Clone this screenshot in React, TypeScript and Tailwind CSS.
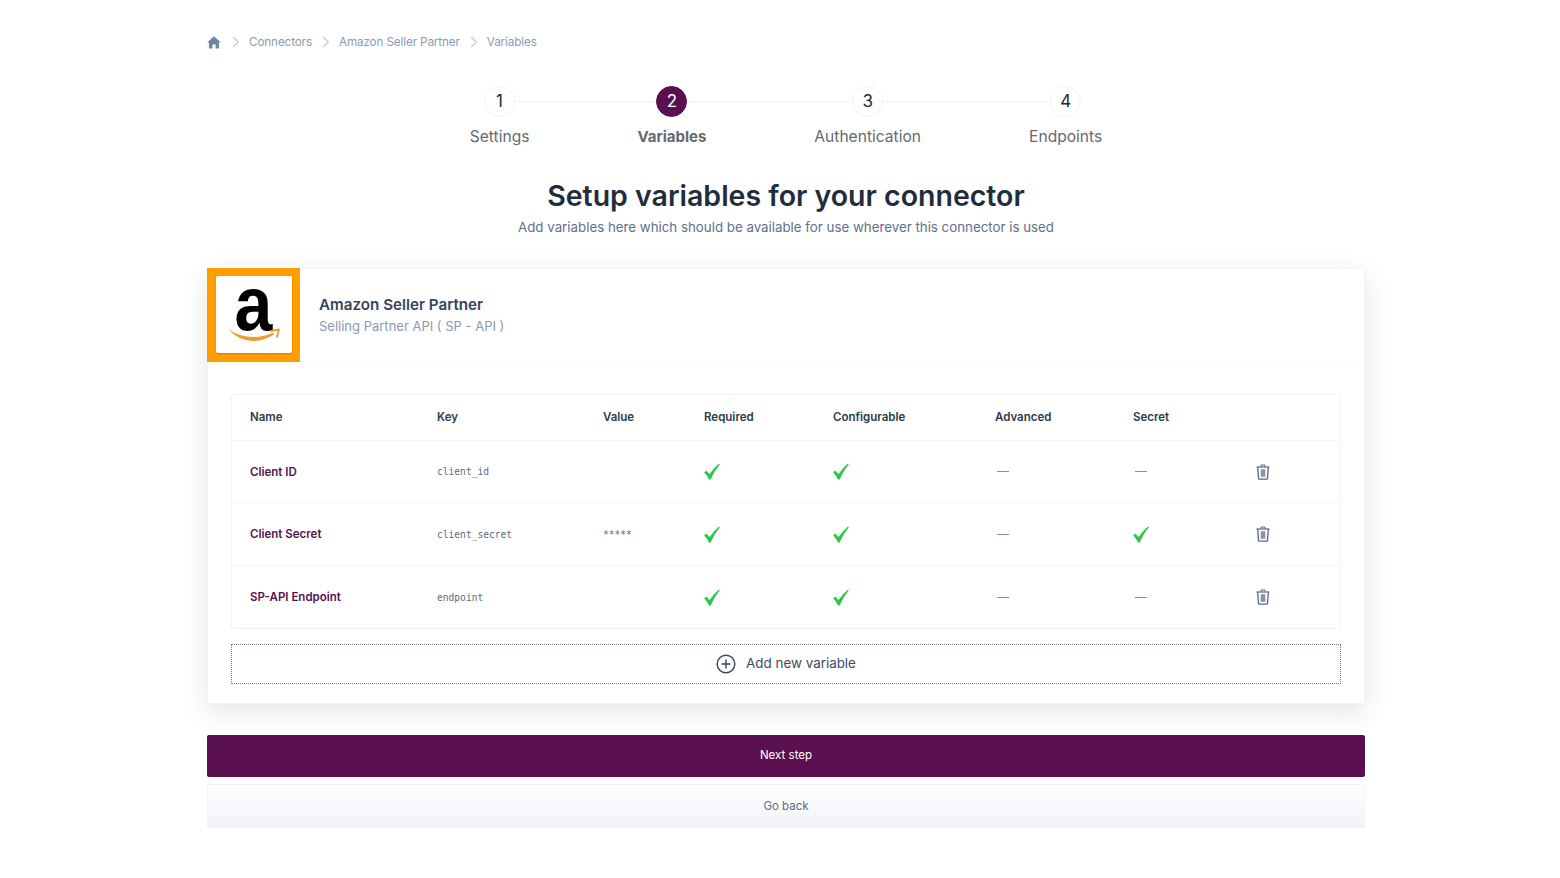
const FONT = "font-['Inter','Liberation_Sans',sans-serif]";

const steps = [
  { n: "1", label: "Settings" },
  { n: "2", label: "Variables", active: true },
  { n: "3", label: "Authentication" },
  { n: "4", label: "Endpoints" },
];

const rows = [
  { name: "Client ID", key: "client_id", value: "", secret: false, h: "h-[62px]" },
  { name: "Client Secret", key: "client_secret", value: "*****", secret: true, h: "h-[63px]" },
  { name: "SP-API Endpoint", key: "endpoint", value: "", secret: false, h: "h-[62px]" },
];

const gridCols = "grid grid-cols-[187px_166px_101px_129px_162px_138px_123px_1fr] pl-[18px] items-center";

const Check = () => (
  <svg width="16" height="17" viewBox="0 0 16 17" fill="#2ac845">
    <path d="M0.2 9.6 L2.2 7.6 L5.6 11 Q9.4 5 15 0.4 L15.8 1.2 Q10.4 7.6 6.6 16.4 L5 16.4 Q3.2 12.6 0.2 9.6 Z" />
  </svg>
);

const Dash = () => <div className="ml-[2px] h-px w-[12px] bg-[#8792a8]" />;

const Trash = () => (
  <svg width="14" height="16" viewBox="0 0 14 16" fill="none" stroke="#5a6679">
    <path d="M0.5 3h13" strokeWidth="1.2" />
    <path d="M5 2.6V1h4v1.6" strokeWidth="1" />
    <path d="M1.7 3.2l.8 11.3a.8.8 0 0 0 .8.7h7.4a.8.8 0 0 0 .8-.7l.8-11.3" strokeWidth="1.3" />
    <rect x="4.7" y="5.2" width="4.6" height="7.6" fill="#8a94a6" stroke="none" />
  </svg>
);

const Chevron = () => (
  <svg width="8" height="12" viewBox="0 0 8 12" fill="none" stroke="#c3cbd8" strokeWidth="1.2">
    <path d="M1.2 1l5.2 5-5.2 5" />
  </svg>
);

export default function App() {
  return (
    <div className={`${FONT} min-h-[878px] bg-white pl-[207px] pr-[195px] pt-[35px] antialiased`}>
      <nav className="flex h-[14px] items-center text-[11.7px] tracking-[-0.12px] text-[#8c9ab3]">
        <svg width="14" height="13" viewBox="0 0 14 13" fill="#6f83a3" className="mr-[11px]">
          <path d="M7 0.3 L13.8 6.6 L12 6.6 L12 12.6 L8.6 12.6 L8.6 8.4 L5.4 8.4 L5.4 12.6 L2 12.6 L2 6.6 L0.2 6.6 Z" />
        </svg>
        <Chevron />
        <span className="ml-[9px] pt-[2px]">Connectors</span>
        <span className="ml-[10px]"><Chevron /></span>
        <span className="ml-[9px] pt-[2px]">Amazon Seller Partner</span>
        <span className="ml-[10px]"><Chevron /></span>
        <span className="ml-[9px] pt-[2px]">Variables</span>
      </nav>

      <div className="relative mt-[37px] flex justify-center gap-[108px]">
        <div className="absolute left-[292px] top-[15px] h-px w-[567px] bg-[#f1f3f5]" />
        {steps.map((s) => (
          <div key={s.n} className="relative flex flex-col items-center">
            <div
              className={`flex h-[31px] w-[31px] items-center justify-center rounded-full border text-[17px] ${
                s.active
                  ? "border-[#5a1050] bg-[#5a1050] text-white"
                  : "border-[#f1f3f5] bg-white text-[#1d2733]"
              }`}
            >
              {s.n}
            </div>
            <div
              className={`mt-[10px] leading-[20px] text-[#666a70] ${
                s.active ? "text-[15px] font-bold" : "text-[15.6px]"
              }`}
            >
              {s.label}
            </div>
          </div>
        ))}
      </div>

      <h1 className="mt-[30px] text-center text-[28.5px] leading-[38px] font-semibold text-[#1f2d3d]">
        Setup variables for your connector
      </h1>
      <p className="mt-[2px] text-center text-[13.3px] leading-[20px] text-[#5f6f8c]">
        Add variables here which should be available for use wherever this connector is used
      </p>

      <section className="mt-[31px] h-[436px] border border-[#f1f3f7] bg-white shadow-[0_8px_24px_rgba(30,45,70,0.12)]">
        <header className="-ml-px -mt-px flex h-[94px] items-center border-b border-[#f4f6f9]">
          <div className="flex h-[94px] w-[93px] shrink-0 items-center justify-center bg-[#ff9e00]">
            <div className="relative flex h-[77px] w-[76px] flex-col items-center rounded-[2px] bg-white shadow-[0_1px_2px_rgba(0,0,0,0.2)]">
              <span className="mt-[-4px] origin-[50%_57.6px] scale-y-[1.13] font-['Liberation_Sans',sans-serif] text-[68px] leading-[68px] font-bold text-black">
                a
              </span>
              <svg width="54" height="18" viewBox="0 0 54 18" fill="none" className="absolute left-[11px] top-[50px]">
                <path d="M1 3 Q13 11 26 11 Q37 11 46 6.5 L47 8.5 Q37 15 26 15 Q12 15 1 3 Z" fill="#f29c2b" />
                <path d="M44 5 L52 3.5 L50 11" stroke="#f29c2b" strokeWidth="1.8" fill="none" strokeLinecap="round" strokeLinejoin="round" />
              </svg>
            </div>
          </div>
          <div className="ml-[19px]">
            <div className="text-[15.2px] leading-[22px] font-semibold text-[#36445a]">Amazon Seller Partner</div>
            <div className="text-[13px] leading-[20px] text-[#8c9ab3]">Selling Partner API ( SP - API )</div>
          </div>
        </header>

        <div className="mx-[23px] mt-[32px] h-[235px] rounded-[3px] border border-[#f0f2f6]">
          <div className={`${gridCols} h-[46px] border-b border-[#f4f6f9] text-[11.5px] font-semibold text-[#2c3a4d]`}>
            <div>Name</div>
            <div>Key</div>
            <div>Value</div>
            <div>Required</div>
            <div>Configurable</div>
            <div>Advanced</div>
            <div>Secret</div>
            <div />
          </div>
          {rows.map((r, i) => (
            <div
              key={r.key}
              className={`${gridCols} ${r.h} ${i < 2 ? "border-b border-[#f6f7fa]" : ""}`}
            >
              <div className="pt-[2px] text-[11.5px] font-semibold text-[#5a1050]">{r.name}</div>
              <div className="pt-[2px] font-['DejaVu_Sans_Mono',monospace] text-[9.6px] text-[#5d6a80]">{r.key}</div>
              <div className="pt-[2px] font-['DejaVu_Sans_Mono',monospace] text-[9.6px] text-[#5d6a80]">{r.value}</div>
              <div><Check /></div>
              <div><Check /></div>
              <div><Dash /></div>
              <div>{r.secret ? <Check /> : <Dash />}</div>
              <div><Trash /></div>
            </div>
          ))}
        </div>

        <div className="mx-[23px] mt-[15px] flex h-[40px] items-center justify-center gap-[10px] border border-dotted border-[#6f7a8e] text-[13.4px] text-[#3c4a5e]">
          <svg width="20" height="20" viewBox="0 0 20 20" fill="none" stroke="#36445a" strokeWidth="1.4">
            <circle cx="10" cy="10" r="8.8" />
            <path d="M10 5.6v8.8M5.6 10h8.8" />
          </svg>
          <span className="pb-[2px]">Add new variable</span>
        </div>
      </section>

      <button className="mt-[31px] block h-[42px] w-full rounded-[2px] bg-[#5a1050] text-[11.5px] text-white">
        Next step
      </button>
      <button className="mt-[7px] block h-[44px] w-full rounded-[2px] border border-[#eff2f6] bg-gradient-to-b from-white to-[#f1f4f8] pt-[2px] text-[11.5px] text-[#5d6a80]">
        Go back
      </button>
    </div>
  );
}
